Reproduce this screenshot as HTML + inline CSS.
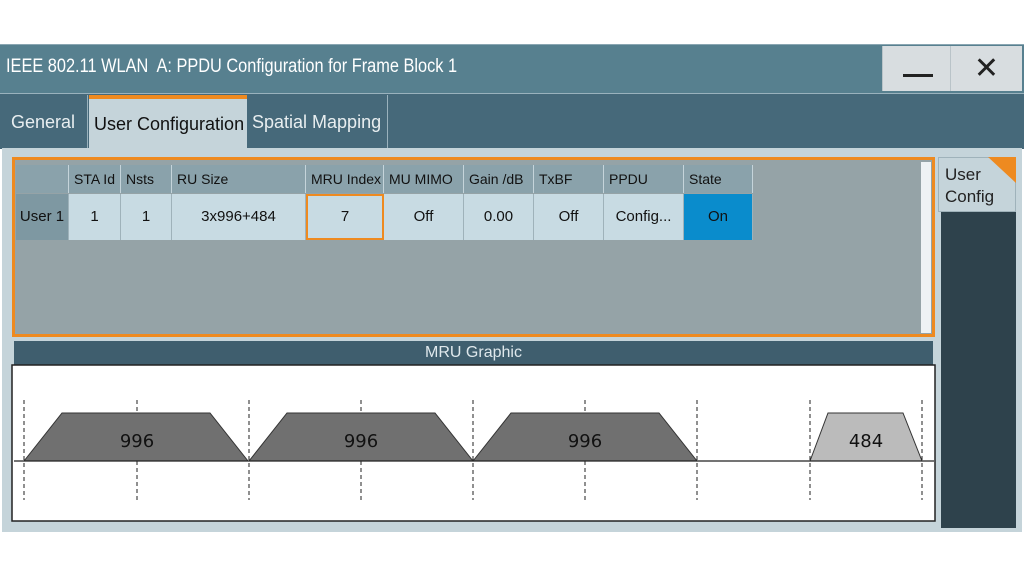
<!DOCTYPE html>
<html><head><meta charset="utf-8"><style>
*{box-sizing:border-box;margin:0;padding:0}
body{width:1024px;height:576px;background:#fff;position:relative;overflow:hidden;font-family:"Liberation Sans",sans-serif}
.a{position:absolute}
.title{left:0;top:44px;width:1024px;height:49px;background:#57808f;border-top:1px solid #8aa6b2}
.tt{left:6px;top:56px;font-size:19px;color:#fff;transform:scaleX(.86);transform-origin:left;white-space:nowrap}
.btn{top:46px;height:45px;background:#d8dde0;border-left:1px solid #b9c3c8}
.tabs{left:0;top:93px;width:1024px;height:56px;background:#46697a;border-top:1px solid #9ab2bd}
.tab{top:95px;height:54px;font-size:18px;line-height:54px;color:#e8eef0;padding-left:8px}
.content{left:2px;top:148px;width:1020px;height:384px;background:#c5d4da}
.cell{position:absolute;font-size:15px;text-align:center;color:#111;font-family:"Liberation Sans",sans-serif}
.h{top:165px;height:28px;line-height:28px;background:#8aa2ab;border-right:1px solid #c5d4da;text-align:left;padding-left:5px;font-size:14px}
.r{top:194px;height:46px;line-height:46px;background:#c8dbe3;border-right:1px solid #9fb2ba}
</style></head><body>
<div class="a title"></div>
<div class="a tt">IEEE 802.11 WLAN&nbsp; A: PPDU Configuration for Frame Block 1</div>
<div class="a btn" style="left:882px;width:68px"><div class="a" style="left:20px;top:28px;width:30px;height:3px;background:#222"></div></div>
<div class="a btn" style="left:950px;width:72px;text-align:center;font-size:30px;line-height:45px;color:#222">✕</div>
<div class="a tabs"></div>
<div class="a tab" style="left:3px;width:85px;background:#46697a;border-right:1px solid #9ab2bd">General</div>
<div class="a tab" style="left:89px;width:158px;background:#c5d4da;color:#111;border-top:4px solid #ee8a20;line-height:50px;padding-left:5px">User Configuration</div>
<div class="a tab" style="left:247px;width:141px;border-right:1px solid #9ab2bd;padding-left:5px">Spatial Mapping</div>
<div class="a content"></div>
<div class="a" style="left:12px;top:157px;width:923px;height:180px;border:3px solid #ee8a20;background:#95a3a7"></div>
<div class="a" style="left:921px;top:162px;width:10px;height:171px;background:#eef2f4"></div>
<div class="cell h" style="left:16px;width:53px"></div>
<div class="cell h" style="left:69px;width:52px">STA Id</div>
<div class="cell h" style="left:121px;width:51px">Nsts</div>
<div class="cell h" style="left:172px;width:134px">RU Size</div>
<div class="cell h" style="left:306px;width:78px">MRU Index</div>
<div class="cell h" style="left:384px;width:80px">MU MIMO</div>
<div class="cell h" style="left:464px;width:70px">Gain /dB</div>
<div class="cell h" style="left:534px;width:70px">TxBF</div>
<div class="cell h" style="left:604px;width:80px">PPDU</div>
<div class="cell h" style="left:684px;width:69px">State</div>
<div class="cell r" style="left:16px;width:53px;background:#7e98a2">User 1</div>
<div class="cell r" style="left:69px;width:52px">1</div>
<div class="cell r" style="left:121px;width:51px">1</div>
<div class="cell r" style="left:172px;width:134px">3x996+484</div>
<div class="cell r" style="left:306px;width:78px;border:2px solid #ee8a20;line-height:42px">7</div>
<div class="cell r" style="left:384px;width:80px">Off</div>
<div class="cell r" style="left:464px;width:70px">0.00</div>
<div class="cell r" style="left:534px;width:70px">Off</div>
<div class="cell r" style="left:604px;width:80px">Config...</div>
<div class="cell r" style="left:684px;width:69px;background:#0a8ccc">On</div>
<div class="a" style="left:938px;top:157px;width:78px;height:55px;background:#c5d4da;border:1px solid #9fb2ba;font-size:17px;color:#222;padding:6px 0 0 6px;line-height:22px">User<br>Config</div>
<div class="a" style="left:988px;top:157px;width:0;height:0;border-top:26px solid #ee8a20;border-left:28px solid transparent"></div>
<div class="a" style="left:941px;top:212px;width:75px;height:316px;background:#2e424c"></div>
<div class="a" style="left:14px;top:341px;width:919px;height:24px;background:#3f5e6e;color:#dfe8ec;font-size:16px;text-align:center;line-height:24px">MRU Graphic</div>
<svg class="a" style="left:11px;top:364px" width="926" height="158" viewBox="11 364 926 158">
<rect x="12" y="365" width="923" height="156" fill="#fff" stroke="#222" stroke-width="1.5"/>
<g fill="#707070" stroke="#333" stroke-width="1">
<polygon points="24,461 62,413 210,413 248,461"/>
<polygon points="249,461 287,413 435,413 473,461"/>
<polygon points="473,461 511,413 659,413 697,461"/>
</g>
<polygon points="810,461 828,413 903,413 922,461" fill="#bbb" stroke="#333"/>
<line x1="14" y1="461" x2="934" y2="461" stroke="#222" stroke-width="1.2"/>
<g stroke="#222" stroke-dasharray="4,3" stroke-width="1">
<line x1="24" y1="400" x2="24" y2="500"/><line x1="249" y1="400" x2="249" y2="500"/>
<line x1="473" y1="400" x2="473" y2="500"/><line x1="697" y1="400" x2="697" y2="500"/>
<line x1="810" y1="400" x2="810" y2="500"/><line x1="922" y1="400" x2="922" y2="500"/>
<line x1="137" y1="400" x2="137" y2="413"/><line x1="137" y1="461" x2="137" y2="500"/>
<line x1="361" y1="400" x2="361" y2="413"/><line x1="361" y1="461" x2="361" y2="500"/>
<line x1="585" y1="400" x2="585" y2="413"/><line x1="585" y1="461" x2="585" y2="500"/>
</g>
<g font-family="DejaVu Sans,sans-serif" font-size="18" fill="#111" text-anchor="middle">
<text x="137" y="447">996</text><text x="361" y="447">996</text><text x="585" y="447">996</text><text x="866" y="447">484</text>
</g>
</svg>
</body></html>
